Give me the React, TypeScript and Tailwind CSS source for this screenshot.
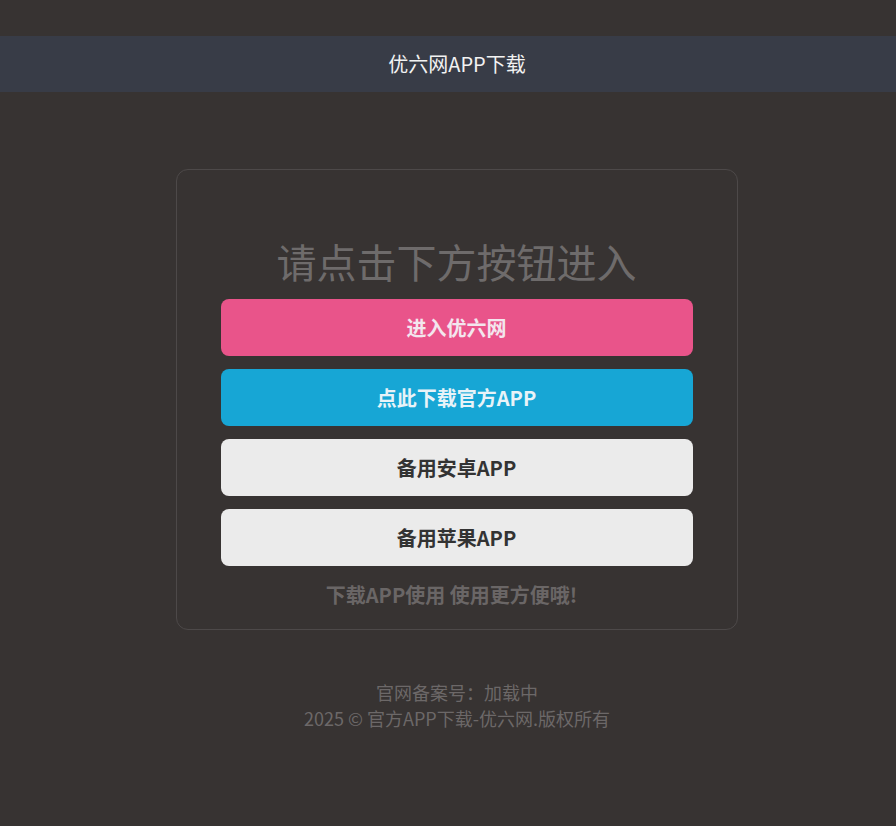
import React from 'react';

const font = { fontFamily: '"Noto Sans CJK SC", "Noto Sans", sans-serif' };

const buttons = [
  { label: '进入优六网', cls: 'bg-[#e9548a] text-[#f3e6ee]' },
  { label: '点此下载官方APP', cls: 'bg-[#17a6d5] text-[#e8f3f8]' },
  { label: '备用安卓APP', cls: 'bg-[#ebebeb] text-[#333333]' },
  { label: '备用苹果APP', cls: 'bg-[#ebebeb] text-[#333333]' },
];

export default function App() {
  return (
    <div className="min-h-[826px] bg-[#373332] pt-[36px]" style={font}>
      <header className="h-[56px] bg-[#383c47] flex items-center justify-center pl-[18px]">
        <span className="text-[20px] text-[#f2f2f2]">优六网APP下载</span>
      </header>

      <main className="flex justify-center pt-[77px] pl-[17px]">
        <div className="w-[562px] border border-[#4d4949] rounded-xl px-[44px] pt-[64px] pb-[19px] flex flex-col">
          <h1 className="text-center text-[40px] leading-[54px] text-[#6e6b6b] mb-[11px]">请点击下方按钮进入</h1>
          <div className="flex flex-col gap-[13px]">
            {buttons.map((b) => (
              <button
                key={b.label}
                className={`h-[57px] rounded-lg text-[20px] font-bold flex items-center justify-center ${b.cls}`}
              >
                {b.label}
              </button>
            ))}
          </div>
          <p className="text-center text-[20px] font-bold text-[#6a6666] mt-[14px] leading-[30px] pr-[10px]">下载APP使用 使用更方便哦!</p>
        </div>
      </main>

      <footer className="mt-[49px] pl-[18px] text-center text-[18px] leading-[26px] text-[#6c6868]">
        <p>官网备案号：加载中</p>
        <p>2025 © 官方APP下载-优六网.版权所有</p>
      </footer>
    </div>
  );
}
